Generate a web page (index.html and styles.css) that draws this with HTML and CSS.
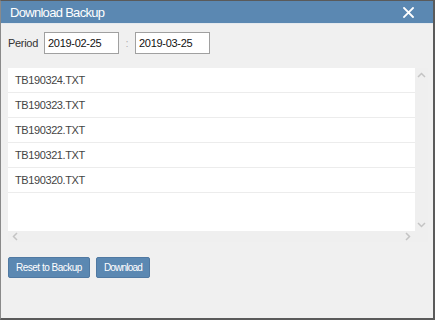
FILE: index.html
```html
<!DOCTYPE html>
<html>
<head>
<meta charset="utf-8">
<link rel="stylesheet" href="styles.css">
</head>
<body>
<div class="window">
  <div class="titlebar">
    <span class="title">Download Backup</span>
    <svg class="close" width="11" height="11" viewBox="0 0 11 11"><path d="M1 1L10 10M10 1L1 10" stroke="#fff" stroke-width="1.8" stroke-linecap="square"/></svg>
  </div>
  <div class="content">
    <div class="period">
      <span class="label">Period</span>
      <input class="date" type="text" value="2019-02-25">
      <span class="sep">:</span>
      <input class="date" type="text" value="2019-03-25">
    </div>
    <div class="list">
      <div class="rows">
        <div class="row">TB190324.TXT</div>
        <div class="row">TB190323.TXT</div>
        <div class="row">TB190322.TXT</div>
        <div class="row">TB190321.TXT</div>
        <div class="row">TB190320.TXT</div>
      </div>
      <div class="vscroll">
        <svg width="9" height="6" viewBox="0 0 9 6"><path d="M1 5L4.5 1.5L8 5" fill="none" stroke="#c4c4c4" stroke-width="1.5"/></svg>
        <svg width="9" height="6" viewBox="0 0 9 6"><path d="M1 1L4.5 4.5L8 1" fill="none" stroke="#c4c4c4" stroke-width="1.5"/></svg>
      </div>
      <div class="hscroll">
        <svg width="6" height="9" viewBox="0 0 6 9"><path d="M5 1L1.5 4.5L5 8" fill="none" stroke="#c4c4c4" stroke-width="1.5"/></svg>
        <svg width="6" height="9" viewBox="0 0 6 9"><path d="M1 1L4.5 4.5L1 8" fill="none" stroke="#c4c4c4" stroke-width="1.5"/></svg>
      </div>
      <div class="corner"></div>
    </div>
    <div class="actions">
      <button class="btn">Reset to Backup</button>
      <button class="btn btn-narrow">Download</button>
    </div>
  </div>
</div>
</body>
</html>
```
FILE: styles.css
```css
html, body {
  margin: 0;
  padding: 0;
  background: #f0f0f0;
}
.window {
  width: 435px;
  height: 320px;
  box-sizing: border-box;
  border: 1px solid #5a5a5a;
  border-left-color: #8a8a8a;
  border-right-width: 2px;
  border-bottom-width: 2px;
  background: #f0f0f0;
  display: flex;
  flex-direction: column;
  font-family: "Liberation Sans", Arial, sans-serif;
}
.titlebar {
  height: 22px;
  background: #5b88b2;
  color: #fff;
  display: flex;
  align-items: center;
  justify-content: space-between;
  padding: 0 19px 0 9px;
  border-bottom: 1px solid #e4e9ee;
}
.title {
  font-size: 13px;
  letter-spacing: -0.7px;
}
.close {
  display: block;
}
.content {
  padding: 8px 5px 0 7px;
  display: flex;
  flex-direction: column;
}
.period {
  display: flex;
  align-items: center;
  height: 22px;
}
.label {
  font-size: 11px;
  letter-spacing: -0.3px;
  color: #333;
  width: 36px;
}
.date {
  width: 75px;
  height: 22px;
  box-sizing: border-box;
  border: 1px solid #a0a0a0;
  padding: 0 3px;
  margin: 0;
  font-family: "Liberation Sans", Arial, sans-serif;
  font-size: 11px;
  letter-spacing: -0.3px;
  color: #111;
  background: #fff;
  outline: none;
}
.sep {
  width: 16px;
  text-align: center;
  color: #b0b0b0;
  font-size: 11px;
}
.list {
  margin-top: 14px;
  width: 420px;
  height: 174px;
  display: grid;
  grid-template-columns: 1fr 13px;
  grid-template-rows: 1fr 11px;
}
.rows {
  background: #fff;
  overflow: hidden;
}
.row {
  height: 24px;
  border-bottom: 1px solid #ececec;
  padding-left: 7px;
  display: flex;
  align-items: center;
  font-size: 11px;
  letter-spacing: -0.4px;
  color: #444;
}
.vscroll {
  background: #efefef;
  display: flex;
  flex-direction: column;
  justify-content: space-between;
  align-items: center;
  padding: 4px 0 3px;
}
.hscroll {
  background: #efefef;
  display: flex;
  justify-content: space-between;
  align-items: center;
  padding: 0 4px 0 4px;
}
.vscroll svg, .hscroll svg {
  display: block;
}
.corner {
  background: #efefef;
}
.actions {
  margin-top: 15px;
  display: flex;
  gap: 6px;
}
.btn {
  height: 21px;
  box-sizing: border-box;
  background: #5b88b2;
  border: 1px solid #5079a2;
  border-radius: 2px;
  color: #fff;
  font-family: "Liberation Sans", Arial, sans-serif;
  font-size: 10px;
  letter-spacing: -0.5px;
  padding: 0 7px;
  margin: 0;
}
.btn-narrow {
  letter-spacing: -0.8px;
}
```
